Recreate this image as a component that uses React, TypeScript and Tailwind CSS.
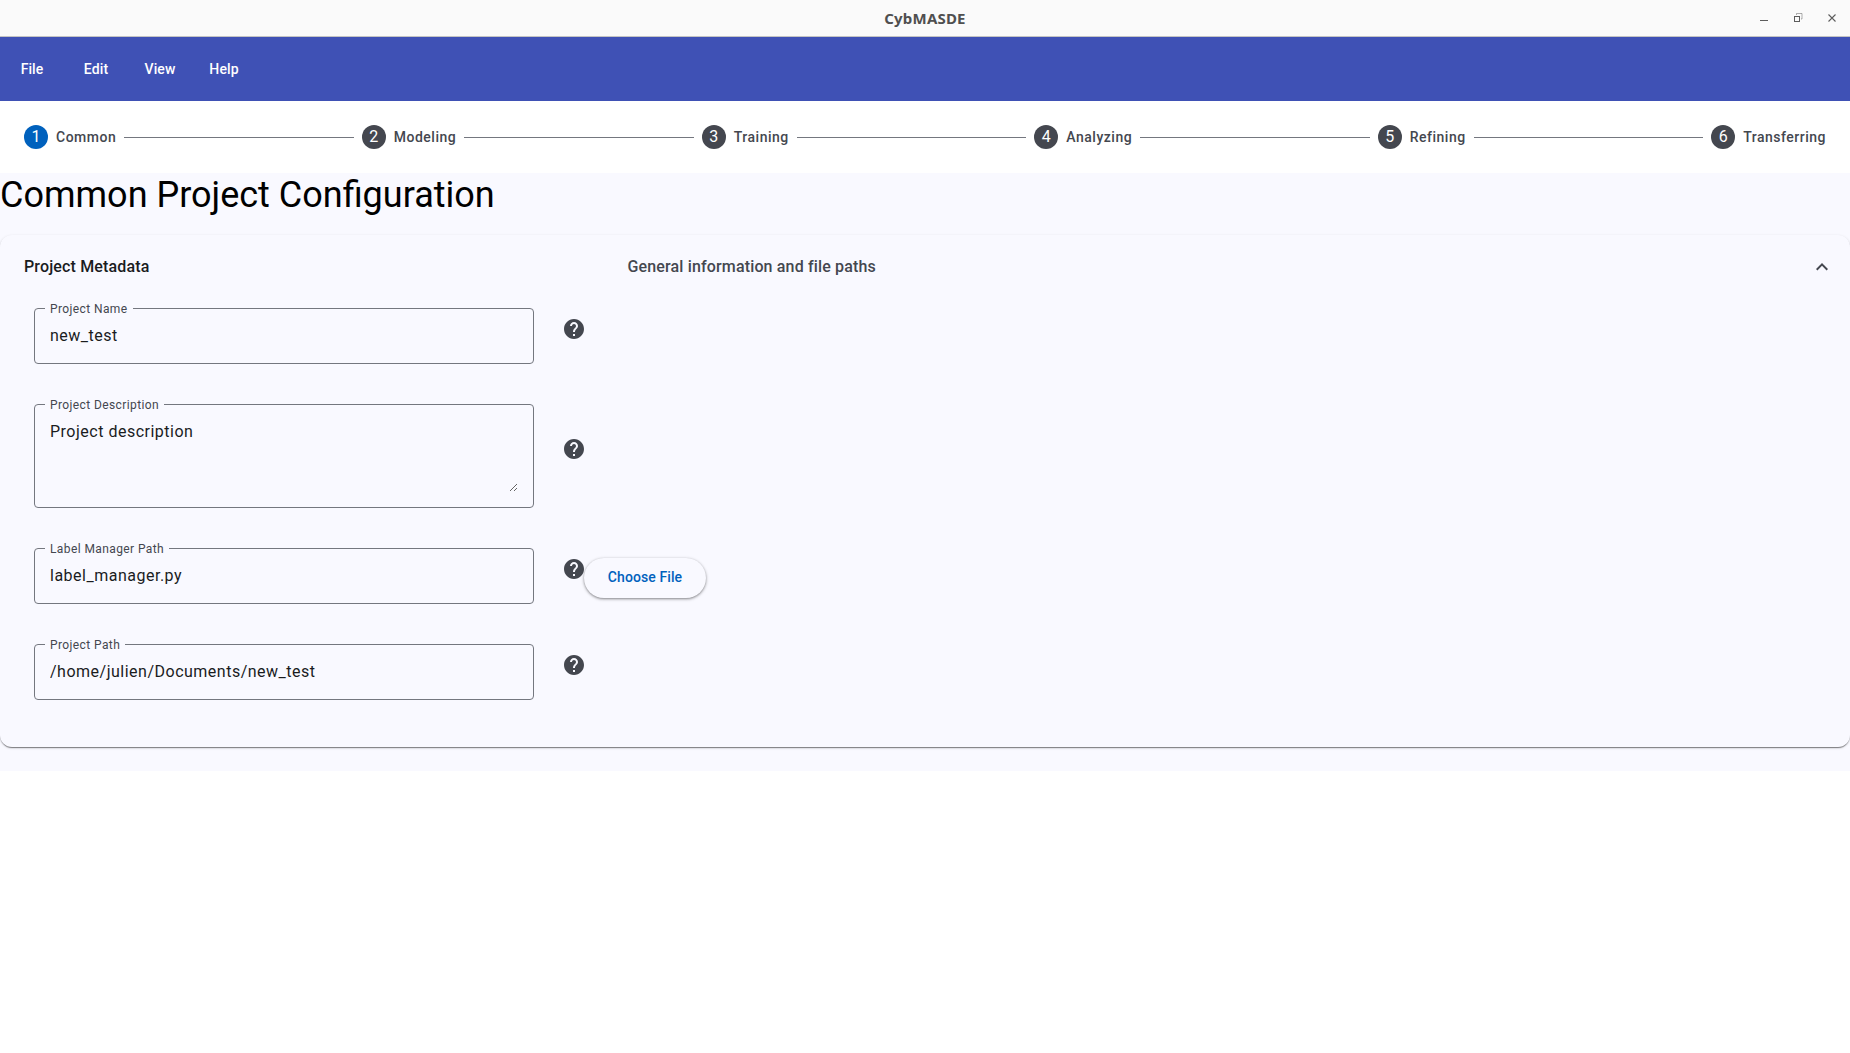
import { Fragment } from "react";

const helpPath = "M12 2C6.48 2 2 6.48 2 12s4.48 10 10 10 10-4.48 10-10S17.52 2 12 2zm1 17h-2v-2h2v2zm2.07-7.75-.9.92C13.45 12.9 13 13.5 13 15h-2v-.5c0-1.1.45-2.1 1.17-2.83l1.24-1.26c.37-.36.59-.86.59-1.41 0-1.1-.9-2-2-2s-2 .9-2 2H8c0-2.21 1.79-4 4-4s4 1.79 4 4c0 .88-.36 1.68-.93 2.25z";

const steps = ["Common", "Modeling", "Training", "Analyzing", "Refining", "Transferring"];

function HelpIcon() {
  return (
    <div className="ml-[28px] w-[22px] mb-[15px] relative z-0">
      <svg viewBox="0 0 24 24" className="w-6 h-6 block fill-[#44474f]">
        <path d={helpPath} />
      </svg>
    </div>
  );
}

function Field({ label, value, multiline }: { label: string; value: string; multiline?: boolean }) {
  return (
    <div className={`relative w-[500px] border border-[#74777f] rounded-[4px] ${multiline ? "h-[104px]" : "h-[56px]"}`}>
      <span className="absolute left-[10px] top-[-8px] px-[5px] bg-[#f9f9ff] text-[12px] leading-[16px] tracking-[0.4px] text-[#44474f]">
        {label}
      </span>
      {multiline ? (
        <textarea
          readOnly
          defaultValue={value}
          className="absolute left-[15px] top-[15px] w-[468px] h-[72px] outline-none bg-transparent text-[16px] leading-[24px] tracking-[0.5px] text-[#1a1c1e] resize-y"
        />
      ) : (
        <input
          readOnly
          defaultValue={value}
          className="w-full h-full px-[15px] pb-[1px] outline-none bg-transparent text-[16px] leading-[24px] tracking-[0.5px] text-[#1a1c1e]"
        />
      )}
    </div>
  );
}

export default function App() {
  return (
    <div className="font-['Roboto',sans-serif] bg-white min-h-[1053px]">
      <div className="h-[37px] bg-[#fafafa] border-b border-[#c4c4c4] flex items-center justify-center relative">
        <span className="font-['Noto_Sans',sans-serif] font-bold text-[15px] text-[#4f4f4f] tracking-[0.2px]">CybMASDE</span>
        <div className="absolute right-0 top-0 h-full flex items-center">
          <svg viewBox="0 0 120 36" className="w-[120px] h-[36px] fill-none stroke-[#5c5c5c]">
            <path d="M30 20.5h8" strokeWidth="1" />
            <rect x="64.5" y="16.5" width="5" height="5" strokeWidth="1" />
            <path d="M66.5 15v-1.5h5.5v5.5h-1" strokeWidth="0.7" opacity="0.7" />
            <path d="M98.5 14.5l7 7M105.5 14.5l-7 7" strokeWidth="1.1" />
          </svg>
        </div>
      </div>

      <div className="h-[64px] bg-[#3f51b5] flex items-center">
        {["File", "Edit", "View", "Help"].map((m) => (
          <span key={m} className="w-[64px] text-center text-white text-[14px] font-medium leading-[24px] tracking-[0.1px]">
            {m}
          </span>
        ))}
      </div>

      <div className="h-[72px] bg-white flex items-center px-[16px]">
        {steps.map((s, i) => (
          <Fragment key={s}>
            <div className="flex items-center px-[8px]">
              <span
                className={`w-6 h-6 rounded-full flex items-center justify-center text-white text-[16px] leading-none ${i === 0 ? "bg-[#0061bd]" : "bg-[#44474f]"}`}
              >
                {i + 1}
              </span>
              <span className="ml-[8px] text-[14px] font-medium leading-[20px] tracking-[0.5px] text-[#44474f]">{s}</span>
            </div>
            {i < steps.length - 1 && <div className="flex-1 border-t border-[#74777f]" />}
          </Fragment>
        ))}
      </div>

      <div className="bg-[#f9f9ff] pb-[24px]">
        <h1 className="text-[36px] leading-[44px] font-normal text-[#000] h-[62px]">Common Project Configuration</h1>

        <div className="bg-[#f9f9ff] rounded-[12px] h-[512px] shadow-[0_2px_1px_-1px_rgba(0,0,0,0.3),0_1px_1px_0_rgba(0,0,0,0.2),0_1px_3px_0_rgba(0,0,0,0.14)]">
          <div className="h-[64px] flex items-center pl-[24px] pr-[16px]">
            <span className="w-[603.5px] text-[16px] font-medium tracking-[0.15px] text-[#1a1c1e]">Project Metadata</span>
            <span className="flex-1 text-[16px] font-medium tracking-[0.15px] text-[#44474f]">General information and file paths</span>
            <svg viewBox="0 0 24 24" className="w-6 h-6 fill-[#44474f]">
              <path d="M12 8l-6 6 1.41 1.41L12 10.83l4.59 4.58L18 14z" />
            </svg>
          </div>

          <div className="pt-[9px] pl-[34px] flex flex-col gap-[40px]">
            <div className="flex items-center">
              <Field label="Project Name" value="new_test" />
              <HelpIcon />
            </div>
            <div className="flex items-center">
              <Field label="Project Description" value="Project description" multiline />
              <HelpIcon />
            </div>
            <div className="flex items-center">
              <Field label="Label Manager Path" value="label_manager.py" />
              <HelpIcon />
              <button className="relative z-10 mt-[4px] w-[122px] h-[40px] pb-[1px] rounded-full bg-[#f9f9ff] text-[#0061bd] text-[14px] font-medium tracking-[0.1px] shadow-[0_1px_2px_rgba(0,0,0,0.3),0_1px_3px_1px_rgba(0,0,0,0.15)]">
                Choose File
              </button>
            </div>
            <div className="flex items-center">
              <Field label="Project Path" value="/home/julien/Documents/new_test" />
              <HelpIcon />
            </div>
          </div>
        </div>
      </div>
    </div>
  );
}
